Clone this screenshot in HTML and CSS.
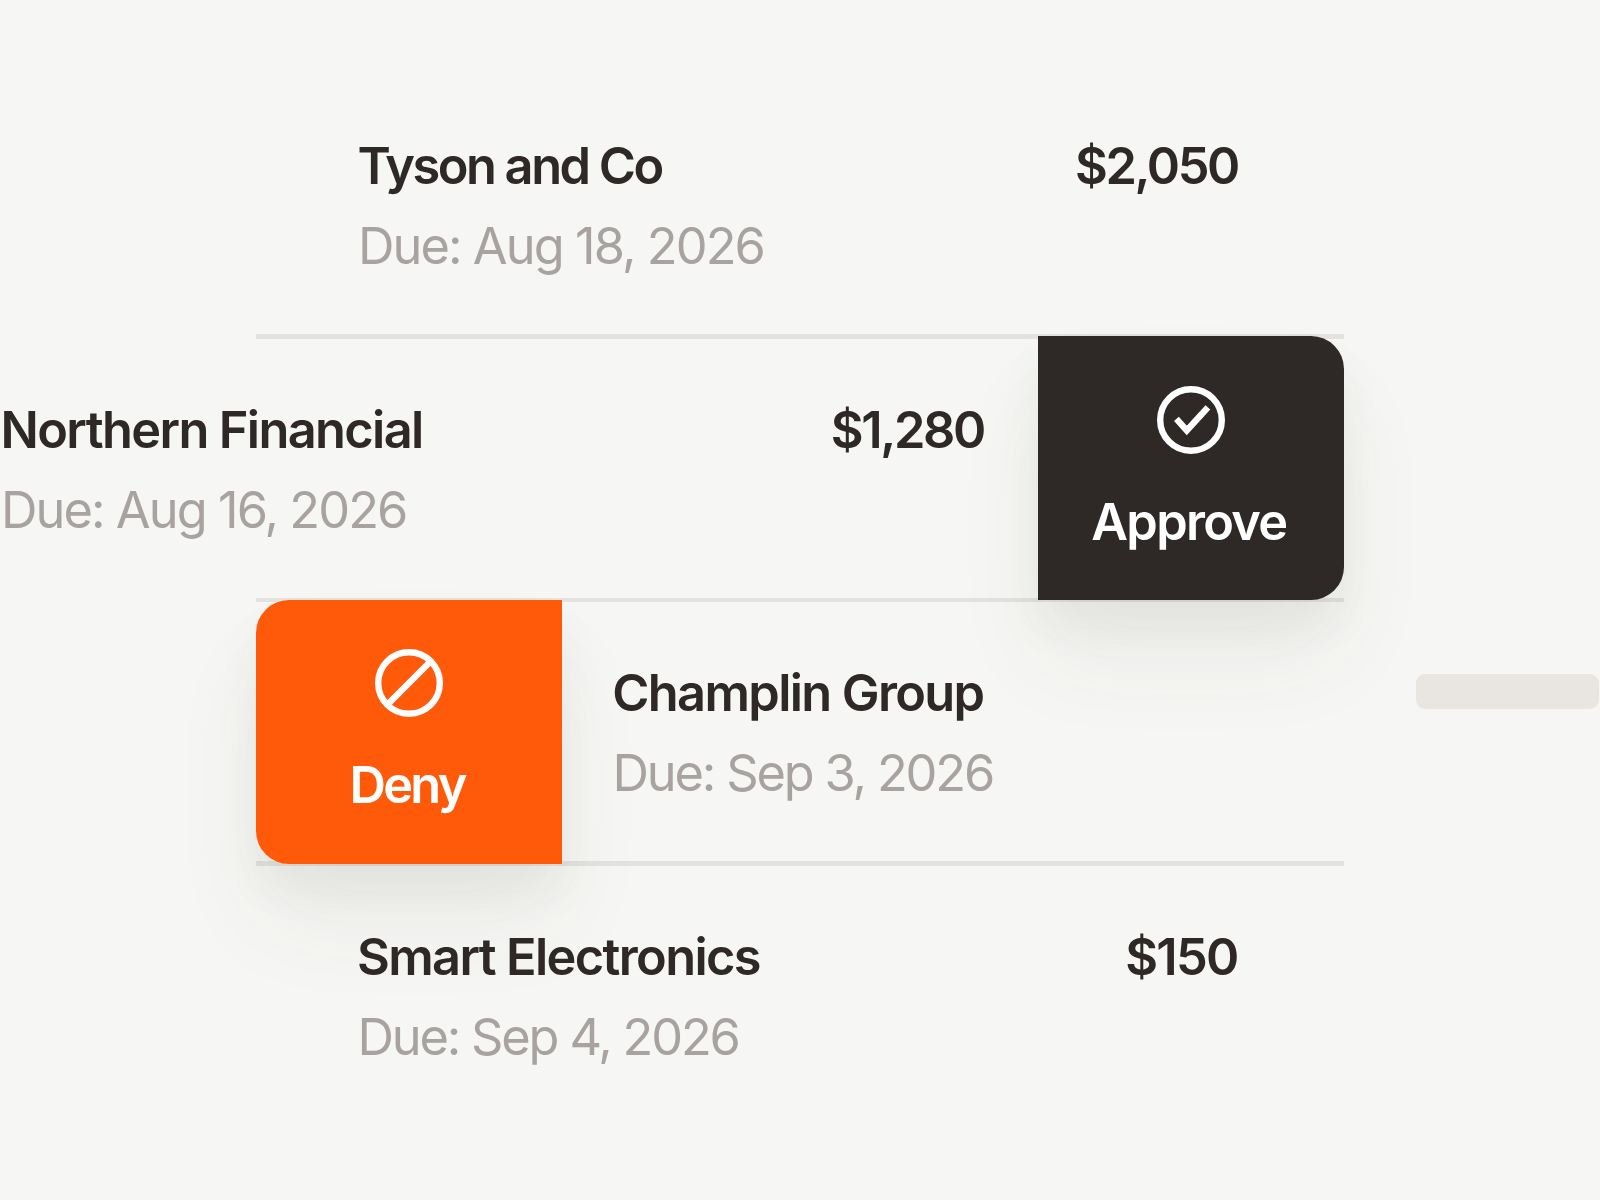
FILE: index.html
```
<!DOCTYPE html>
<html lang="en">
<head>
<meta charset="utf-8">
<title>Bills to approve</title>
<link rel="stylesheet" href="styles.css">
</head>
<body>
<main class="bills">
  <section class="bill">
    <div class="info"><h2 class="name tyson">Tyson and Co</h2><p class="due">Due: Aug 18, 2026</p></div>
    <div class="amount wide">$2,050</div>
  </section>
  <hr class="divider">
  <section class="bill bill-approve">
    <div class="info"><h2 class="name">Northern Financial</h2><p class="due">Due: Aug 16, 2026</p></div>
    <div class="amount wide">$1,280</div>
    <button class="action approve">
      <svg class="icon" viewBox="0 0 68 68"><circle cx="34" cy="34" r="30.8"/><path d="M19.4 32.8 29.8 44.4 50.9 21.3"/></svg>
      <span class="label">Approve</span>
    </button>
  </section>
  <hr class="divider">
  <section class="bill bill-deny">
    <button class="action deny">
      <svg class="icon" viewBox="0 0 68 68"><circle cx="34" cy="34" r="30.8"/><path d="M12.8 55.2 55.2 12.8"/></svg>
      <span class="label">Deny</span>
    </button>
    <div class="info"><h2 class="name">Champlin Group</h2><p class="due sep">Due: Sep 3, 2026</p></div>
    <div class="skeleton"></div>
  </section>
  <hr class="divider">
  <section class="bill bill-last">
    <div class="info"><h2 class="name">Smart Electronics</h2><p class="due sep">Due: Sep 4, 2026</p></div>
    <div class="amount">$150</div>
  </section>
</main>
</body>
</html>
```
FILE: styles.css
```
* { box-sizing: border-box; margin: 0; padding: 0; }

body {
  width: 1600px;
  height: 1200px;
  overflow: hidden;
  background: #f6f6f4;
  color: #2e2826;
  font: 600 50.5px/80px Inter, "Liberation Sans", sans-serif;
}

.bills { padding: 75.25px 256px 0; }

.bill {
  display: flex;
  height: 259px;
  padding: 0 106px 0 101.5px;
}

.divider {
  height: 4.5px;
  border: 0;
  background: #e3e2df;
}

.info, .amount {
  position: relative;
  z-index: 1;
  padding-top: 50.8px;
  white-space: nowrap;
}

.name {
  font: inherit;
  letter-spacing: -1.63px;
}

.tyson { letter-spacing: -2.48px; }

.due {
  padding-left: 0.4px;
  color: #a8a3a0;
  font-weight: 400;
  letter-spacing: -1.91px;
}

.sep { letter-spacing: -2.16px; }

.amount {
  margin-left: auto;
  letter-spacing: -1.75px;
}

.wide { letter-spacing: -2.4px; }

.bill-approve {
  margin-left: -255.5px;
  padding: 0;
}

.bill-deny {
  width: 1343px;
  padding: 0;
}

.bill-deny .info { padding-left: 50px; }

.bill-last { padding: 0 106.5px 0 101px; }

.action {
  display: flex;
  flex: none;
  flex-direction: column;
  align-items: center;
  gap: 28px;
  position: relative;
  width: 306.2px;
  margin: -2.5px 0;
  padding-top: 49.5px;
  border: 0;
  color: #fff;
  font: inherit;
  box-shadow: 0 26px 44px rgba(60, 65, 48, 0.06), 0 60px 96px rgba(60, 65, 48, 0.06);
}

.label { margin-right: 4px; }

.approve {
  margin-left: 54px;
  border-radius: 0 33px 33px 0;
  background: #2e2826;
  letter-spacing: -1.7px;
}

.deny {
  border-radius: 33px 0 0 33px;
  background: #ff5a0a;
  letter-spacing: -2.7px;
}

.icon {
  flex: none;
  width: 68px;
  height: 68px;
  fill: none;
  stroke: #fff;
  stroke-width: 6.4;
}

.skeleton {
  width: 183px;
  height: 35px;
  margin: 71.5px 0 0 auto;
  border-radius: 9px;
  background: #e9e6e2;
}
```
